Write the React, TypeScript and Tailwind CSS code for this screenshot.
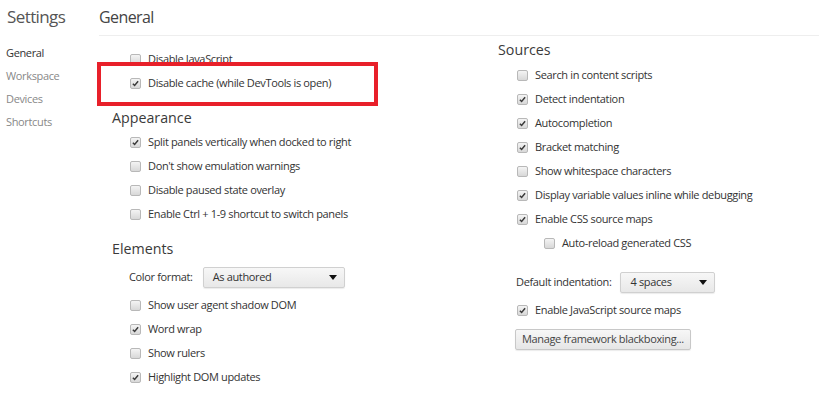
import React from 'react';

const font = { fontFamily: '"Open Sans", "Noto Sans", sans-serif' };

function Box({ checked }: { checked?: boolean }) {
  return (
    <span className="flex h-[11px] w-[11px] shrink-0 items-center justify-center rounded-[2px] border border-[#b8b8b8] bg-gradient-to-b from-[#f4f4f4] to-[#d8d8d8]">
      {checked && (
        <svg width="7" height="7" viewBox="0 0 8 8">
          <path d="M1 4.3 L3 6.3 L7 1.5" stroke="#3a3a3a" strokeWidth="1.7" fill="none" />
        </svg>
      )}
    </span>
  );
}

function Check({ label, checked, indent }: { label: string; checked?: boolean; indent?: boolean }) {
  return (
    <div className={`flex h-[24px] items-center gap-[7px] ${indent ? 'pl-[27px]' : ''}`}>
      <Box checked={checked} />
      <span className="whitespace-nowrap">{label}</span>
    </div>
  );
}

function Header({ title, first }: { title: string; first?: boolean }) {
  return (
    <div className={`flex h-[24px] items-center text-[14.25px] tracking-normal text-[#3a3a3a] ${first ? '' : 'mt-[11px]'}`}>
      {title}
    </div>
  );
}

function Select({ value, width }: { value: string; width: string }) {
  return (
    <div
      className={`flex h-[21px] ${width} items-center justify-between rounded-[2px] border border-[#d0d0d0] bg-gradient-to-b from-[#f7f7f7] to-[#e8e8e8] pl-[9px] pr-[7px] shadow-[0_1px_1px_rgba(0,0,0,0.08)]`}
    >
      <span>{value}</span>
      <svg width="8" height="5" viewBox="0 0 8 5">
        <path d="M0 0 H8 L4 5 Z" fill="#111" />
      </svg>
    </div>
  );
}

export default function App() {
  const nav = ['General', 'Workspace', 'Devices', 'Shortcuts'];

  return (
    <div
      className="relative h-[408px] w-[819px] overflow-hidden bg-white text-[11px] tracking-[-0.35px] text-[#333]"
      style={font}
    >
      <div className="flex">
        {/* sidebar */}
        <div className="w-[99px] shrink-0">
          <div className="flex h-[35px] items-center pl-[7px] pb-[1px] text-[17px] tracking-[-0.6px] text-[#555]">
            Settings
          </div>
          <div className="mt-[7px] flex flex-col pl-[6px]">
            {nav.map((n, i) => (
              <div key={n} className={`flex h-[23px] items-center ${i === 0 ? 'text-[#333]' : 'text-[#888]'}`}>
                {n}
              </div>
            ))}
          </div>
        </div>

        {/* main */}
        <div className="flex-1">
          <div className="flex h-[36px] items-center border-b border-[#eeeeee] pb-[2px] text-[16px] tracking-[-0.6px] text-[#444]">
            General
          </div>

          <div className="flex">
            {/* left column */}
            <div className="w-[399px] shrink-0 pl-[13px]">
              <div className="pl-[18px] pt-[11px]">
                <Check label="Disable JavaScript" />
                <Check label="Disable cache (while DevTools is open)" checked />
              </div>

              <Header title="Appearance" />
              <div className="pl-[18px]">
                <Check label="Split panels vertically when docked to right" checked />
                <Check label="Don't show emulation warnings" />
                <Check label="Disable paused state overlay" />
                <Check label="Enable Ctrl + 1-9 shortcut to switch panels" />
              </div>

              <Header title="Elements" />
              <div className="pl-[17px]">
                <div className="flex h-[32px] items-center gap-[10px]">
                  <span>Color format:</span>
                  <Select value="As authored" width="w-[142px]" />
                </div>
                <div className="pl-[1px]">
                  <Check label="Show user agent shadow DOM" />
                  <Check label="Word wrap" checked />
                  <Check label="Show rulers" />
                  <Check label="Highlight DOM updates" checked />
                </div>
              </div>
            </div>

            {/* right column */}
            <div className="flex-1 pt-[2px]">
              <Header title="Sources" first />
              <div className="pl-[19px] pt-[1px]">
                <Check label="Search in content scripts" />
                <Check label="Detect indentation" checked />
                <Check label="Autocompletion" checked />
                <Check label="Bracket matching" checked />
                <Check label="Show whitespace characters" />
                <Check label="Display variable values inline while debugging" checked />
                <Check label="Enable CSS source maps" checked />
                <Check label="Auto-reload generated CSS" indent />

                <div className="mt-[12px] flex h-[31px] items-center gap-[9px] -ml-[1px]">
                  <span>Default indentation:</span>
                  <Select value="4 spaces" width="w-[95px]" />
                </div>
                <Check label="Enable JavaScript source maps" checked />
                <button className="mt-[7px] -ml-[2px] flex h-[21px] items-center rounded-[2px] border border-[#c8c8c8] bg-gradient-to-b from-[#f7f7f7] to-[#e6e6e6] px-[6px] text-[#444] shadow-[0_1px_1px_rgba(0,0,0,0.08)]">
                  Manage framework blackboxing...
                </button>
              </div>
            </div>
          </div>
        </div>
      </div>

      {/* red highlight annotation */}
      <div className="pointer-events-none absolute left-[97px] top-[62px] h-[44px] w-[281px] border-[4px] border-[#e8202a]" />
    </div>
  );
}
